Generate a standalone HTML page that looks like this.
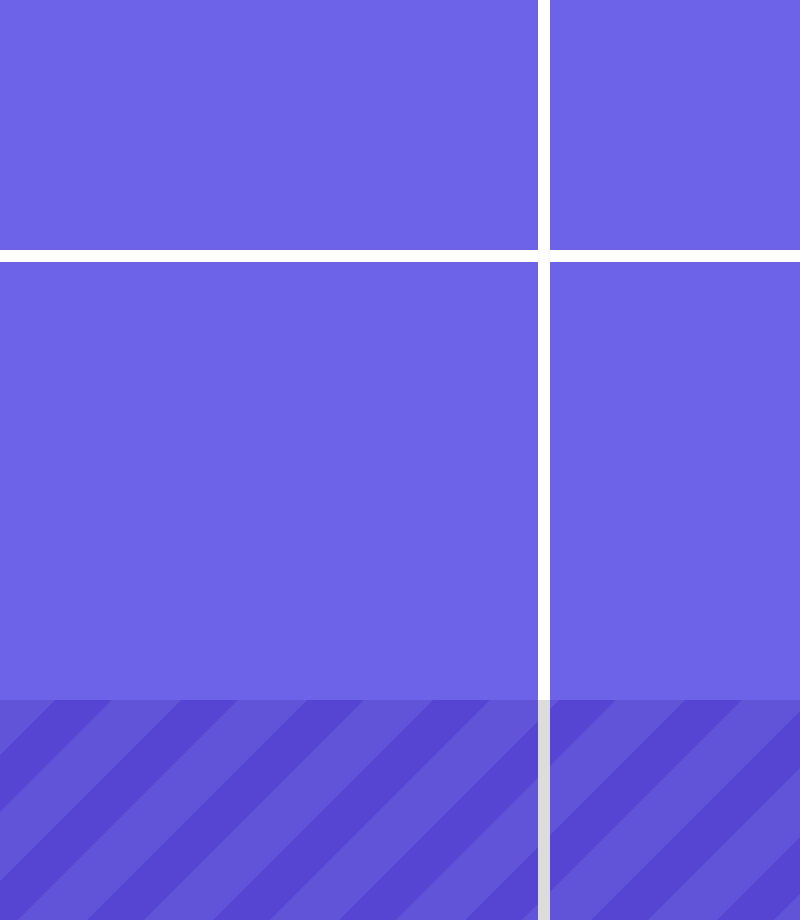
<!DOCTYPE html>
<html><head><meta charset="utf-8"><style>
html,body{margin:0;padding:0;width:800px;height:920px;overflow:hidden;background:#fff;position:relative}
.b{position:absolute;background:#6c63e8}
</style></head><body>
<div class="b" style="left:0;top:0;width:538px;height:250px"></div>
<div class="b" style="left:550px;top:0;width:250px;height:250px"></div>
<div class="b" style="left:0;top:262px;width:538px;height:658px"></div>
<div class="b" style="left:550px;top:262px;width:250px;height:658px"></div>
<svg style="position:absolute;left:0;top:700px" width="800" height="220">
<defs><pattern id="p" patternUnits="userSpaceOnUse" width="126" height="126">
<rect width="126" height="126" fill="#6254d9"/>
<polygon points="55,0 112,0 0,112 0,55" fill="#5645d3"/>
<polygon points="126,55 126,112 112,126 55,126" fill="#5645d3"/>
</pattern></defs>
<rect width="800" height="220" fill="url(#p)"/>
<rect x="538" width="12" height="220" fill="#dcdcdc"/>
</svg>
</body></html>
